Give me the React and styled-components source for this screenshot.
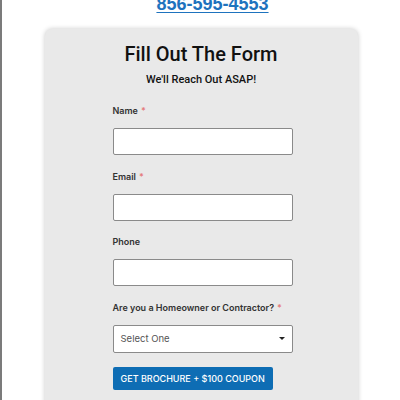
import styled, { createGlobalStyle } from 'styled-components';

const GlobalStyle = createGlobalStyle`
  html, body {
    margin: 0;
    background: #ffffff;
    overflow: hidden;
  }
  body {
    border-left: 2px solid #7b7b7b;
    min-height: 400px;
    font-family: Roboto, "Liberation Sans", sans-serif;
  }
`;

const PageWrapper = styled.div`
  display: flex;
  flex-direction: column;
  align-items: center;
`;

const PhoneLink = styled.a`
  margin-top: -7px;
  margin-left: 23px;
  font-family: "Liberation Sans", Arial, sans-serif;
  font-weight: 700;
  font-size: 18px;
  line-height: 22px;
  color: #1e73be;
  text-decoration: underline;
  text-underline-offset: 2px;
`;

const FormCard = styled.div`
  width: 313px;
  margin-top: 14px;
  padding: 13px 0 40px;
  box-sizing: border-box;
  background: #e9e9e9;
  border-radius: 7px;
  box-shadow: 0 0 5px rgba(0, 0, 0, 0.22);
  display: flex;
  flex-direction: column;
  align-items: center;
`;

const FormTitle = styled.h2`
  margin: 0;
  font-size: 20px;
  line-height: 24px;
  font-weight: 500;
  color: #111;
`;

const FormSubtitle = styled.p`
  margin: 7px 0 0;
  font-size: 11px;
  line-height: 14px;
  font-weight: 500;
  color: #111;
`;

const Form = styled.form`
  width: 180px;
  margin-top: 18px;
  margin-left: 3px;
  display: flex;
  flex-direction: column;
  font-family: Inter, Roboto, sans-serif;
`;

const FieldGroup = styled.div`
  display: flex;
  flex-direction: column;
  margin-bottom: 15.5px;
`;

const FieldLabel = styled.label`
  font-size: 9px;
  line-height: 12px;
  font-weight: 600;
  color: #333;
  margin-bottom: 11px;
`;

const Required = styled.span`
  color: #e57b7b;
  margin-left: 3px;
`;

const TextInput = styled.input`
  height: 27px;
  box-sizing: border-box;
  border: 1px solid #8a8a8a;
  border-radius: 2px;
  background: #fff;
  padding: 0 8px;
  font-family: inherit;
`;

const SelectBox = styled.div`
  height: 28px;
  box-sizing: border-box;
  border: 1px solid #8a8a8a;
  border-radius: 2px;
  background: #fff;
  padding: 0 7px;
  display: flex;
  align-items: center;
  justify-content: space-between;
  font-size: 9.5px;
  color: #555;
`;

const Caret = styled.span`
  width: 0;
  height: 0;
  border-left: 3px solid transparent;
  border-right: 3px solid transparent;
  border-top: 3px solid #222;
`;

const SubmitButton = styled.button`
  align-self: flex-start;
  margin-top: -1.5px;
  height: 23px;
  padding: 0 8px;
  border: none;
  border-radius: 2px;
  background: #0e6db4;
  color: #fff;
  font-family: inherit;
  font-size: 9px;
  font-weight: 500;
  text-transform: uppercase;
`;

const fields = [
  { id: 'name', label: 'Name', required: true },
  { id: 'email', label: 'Email', required: true },
  { id: 'phone', label: 'Phone', required: false },
];

const App = () => {
  return (
    <>
      <GlobalStyle />
      <PageWrapper>
        <PhoneLink href='#'>856-595-4553</PhoneLink>
        <FormCard>
          <FormTitle>Fill Out The Form</FormTitle>
          <FormSubtitle>We'll Reach Out ASAP!</FormSubtitle>
          <Form>
            {fields.map((f) => (
              <FieldGroup key={f.id}>
                <FieldLabel htmlFor={f.id}>
                  {f.label}
                  {f.required && <Required>*</Required>}
                </FieldLabel>
                <TextInput type='text' id={f.id} name={f.id} />
              </FieldGroup>
            ))}
            <FieldGroup>
              <FieldLabel>
                Are you a Homeowner or Contractor?<Required>*</Required>
              </FieldLabel>
              <SelectBox>
                Select One
                <Caret />
              </SelectBox>
            </FieldGroup>
            <SubmitButton type='button'>Get Brochure + $100 Coupon</SubmitButton>
          </Form>
        </FormCard>
      </PageWrapper>
    </>
  );
};

export default App;
